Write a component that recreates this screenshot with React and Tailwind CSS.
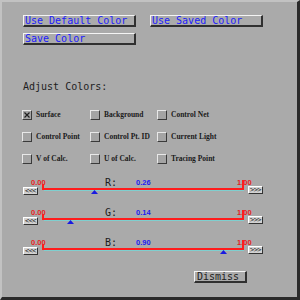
import React from 'react';

const mono = { fontFamily: '"DejaVu Sans Mono", "Liberation Mono", monospace' };
const serif = { fontFamily: '"Liberation Serif", serif' };
const sans = { fontFamily: '"Liberation Sans", Arial, sans-serif' };

function BevelButton({ label, width, tone = 'text-[#1c1cff]' }) {
  return (
    <div
      className={`${width} ${tone} h-[12px] flex items-center pl-[1px] bg-[#ababab] border-t border-l border-t-[#f4f4f4] border-l-[#f4f4f4] border-b-2 border-r-2 border-b-[#303030] border-r-[#303030] text-[10px] leading-none`}
      style={mono}
    >
      {label}
    </div>
  );
}

function Check({ label, checked }) {
  return (
    <div className="flex items-center gap-[4px] h-[10px]">
      <div className="w-[10px] h-[10px] flex items-center justify-center bg-[#a4a4a4] border-t border-l border-t-[#e8e8e8] border-l-[#e8e8e8] border-b border-r border-b-[#3a3a3a] border-r-[#3a3a3a]">
        {checked && (
          <svg width="6" height="6" viewBox="0 0 6 6">
            <path d="M0.5 0.5 L5.5 5.5 M5.5 0.5 L0.5 5.5" stroke="#202020" strokeWidth="1.2" />
          </svg>
        )}
      </div>
      <span className="text-[7.5px] leading-[10px] font-bold text-[#1a1a1a] whitespace-nowrap" style={serif}>
        {label}
      </span>
    </div>
  );
}

function ArrowButton({ label }) {
  return (
    <div
      className="w-[15px] h-[8px] flex items-center justify-center bg-[#d2d2d2] border-t border-l border-t-white border-l-white border-b border-r border-b-[#333] border-r-[#333] text-[7px] leading-none tracking-[-0.5px] text-[#222]"
      style={mono}
    >
      {label}
    </div>
  );
}

function Slider({ name, value }) {
  const trackWidth = 202;
  return (
    <div className="flex flex-col w-[240px]">
      <div className="flex h-[7px] items-start whitespace-nowrap">
        <div className="w-[8px]" />
        <span className="w-[74px] text-[7.5px] leading-[7px] font-bold text-[#e82020]" style={sans}>0.00</span>
        <span className="w-[31px] text-[10px] leading-[7px] text-[#1a1a1a]" style={mono}>{name}:</span>
        <span className="w-[101px] text-[7.5px] leading-[7px] font-bold text-[#1c1cf0]" style={sans}>{value.toFixed(2)}</span>
        <span className="text-[7.5px] leading-[7px] font-bold text-[#e82020]" style={sans}>1.00</span>
      </div>
      <div className="flex -mt-[2px] h-[11px]">
        <div className="mt-[3px]">
          <ArrowButton label="<<<" />
        </div>
        <div className="relative ml-[4px] w-[202px] h-[8px]">
          <div className="absolute left-0 top-0 w-[2px] h-[6px] bg-[#ff1c1c]" />
          <div className="absolute left-0 right-0 top-[4px] h-[2px] bg-[#ff1c1c]" />
          <div className="absolute left-[2px] right-0 top-[6px] h-[1px] bg-[#7fcfcf]" />
          <div className="absolute right-0 -top-[4px] w-[2px] h-[10px] bg-[#ff1c1c]" />
          <svg
            className="absolute top-[6px]"
            style={{ left: value * trackWidth - 3.5 }}
            width="7"
            height="4"
            viewBox="0 0 7 4"
          >
            <polygon points="3.5,0 7,4 0,4" fill="#1a1ae0" />
          </svg>
        </div>
        <div className="mt-[2px] ml-[4px]">
          <ArrowButton label=">>>" />
        </div>
      </div>
    </div>
  );
}

export default function App() {
  return (
    <div className="w-[300px] h-[300px] box-border bg-[#aaaaaa] border-t-2 border-l-2 border-t-[#c2c2c2] border-l-[#c2c2c2] border-r-[3px] border-b-[3px] border-r-[#2a2a2a] border-b-[#2a2a2a] pl-[21px] pt-[13px] flex flex-col">
      <div className="flex gap-[14px]">
        <BevelButton label="Use Default Color" width="w-[113px]" />
        <BevelButton label="Use Saved Color" width="w-[113px]" />
      </div>
      <div className="mt-[6px]">
        <BevelButton label="Save Color" width="w-[113px]" />
      </div>

      <div className="mt-[37px] text-[10px] leading-[10px] text-[#1e1e1e]" style={mono}>
        Adjust Colors:
      </div>

      <div className="mt-[18px] -ml-[1px] grid grid-cols-[68px_67px_auto] gap-y-[12px]">
        <Check label="Surface" checked />
        <Check label="Background" />
        <Check label="Control Net" />
        <Check label="Control Point" />
        <Check label="Control Pt. ID" />
        <Check label="Current Light" />
        <Check label="V of Calc." />
        <Check label="U of Calc." />
        <Check label="Tracing Point" />
      </div>

      <div className="mt-[15px] flex flex-col gap-[14px]">
        <Slider name="R" value={0.26} />
        <Slider name="G" value={0.14} />
        <Slider name="B" value={0.9} />
      </div>

      <div className="mt-[16px] ml-[171px]">
        <BevelButton label="Dismiss" width="w-[53px]" tone="text-[#1e1e1e] pl-[2px]" />
      </div>
    </div>
  );
}
